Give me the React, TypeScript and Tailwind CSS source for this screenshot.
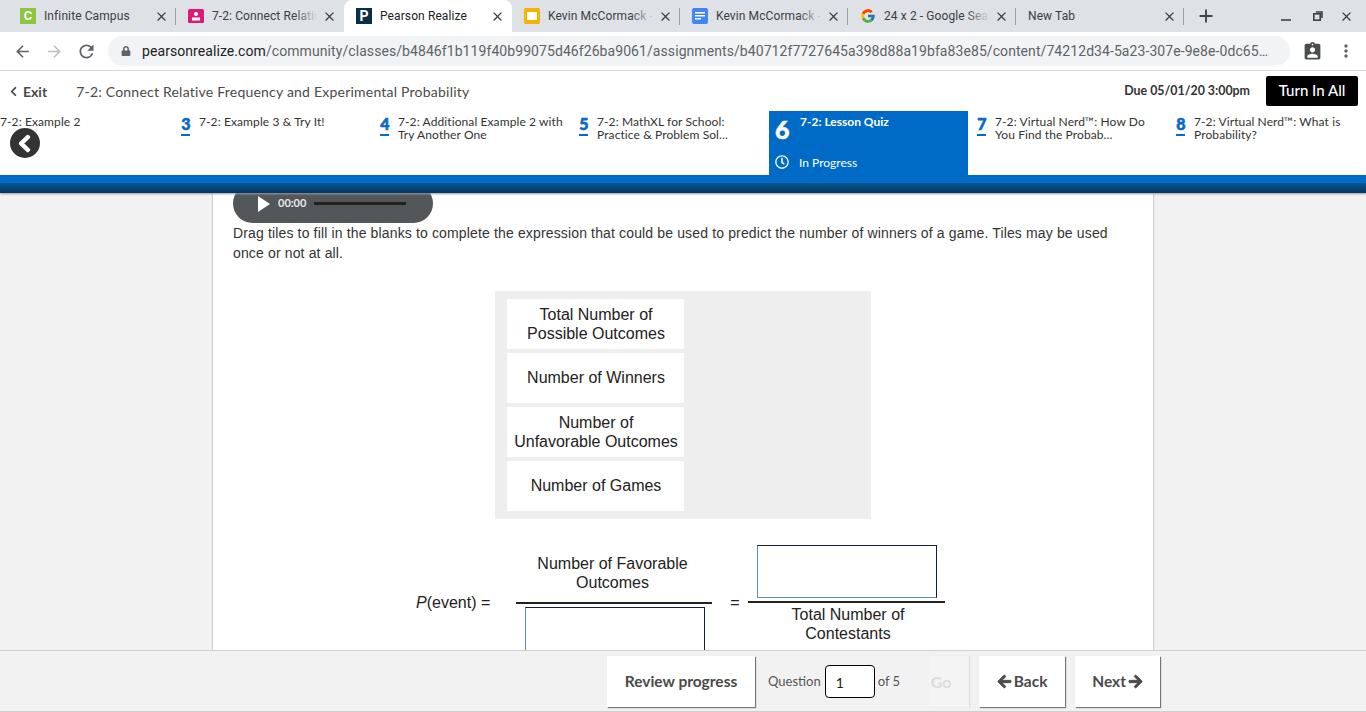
import React from 'react';
import { FaArrowLeft, FaArrowRight, FaChevronLeft, FaLock, FaRegClock } from 'react-icons/fa';
import { FcGoogle } from 'react-icons/fc';
import { MdAdd, MdArrowBack, MdArrowForward, MdAssignmentInd, MdClose, MdMoreVert, MdRefresh } from 'react-icons/md';

const Favicon = ({ kind }: { kind: string }) => {
  if (kind === 'campus')
    return <div className="w-4 h-4 bg-[#8cc63f] text-white text-[13px] font-bold leading-4 text-center">C</div>;
  if (kind === 'classroom')
    return (
      <svg width="16" height="16" viewBox="0 0 16 16">
        <rect y="1" width="16" height="14" rx="1.5" fill="#d81b7a" />
        <circle cx="8" cy="6" r="2" fill="#fff" />
        <rect x="4" y="9.5" width="8" height="3" fill="#fff" />
      </svg>
    );
  if (kind === 'pearson')
    return <div className="w-4 h-4 bg-[#0b2f47] text-white text-[14px] font-bold leading-4 text-center">P</div>;
  if (kind === 'slides')
    return (
      <svg width="16" height="16" viewBox="0 0 16 16">
        <rect width="16" height="16" rx="2" fill="#f4b400" />
        <rect x="3" y="4" width="10" height="8" fill="#fff" />
      </svg>
    );
  if (kind === 'docs')
    return (
      <svg width="16" height="16" viewBox="0 0 16 16">
        <rect width="16" height="16" rx="2" fill="#4285f4" />
        <rect x="3" y="4" width="10" height="1.5" fill="#fff" />
        <rect x="3" y="7" width="10" height="1.5" fill="#fff" />
        <rect x="3" y="10" width="6" height="1.5" fill="#fff" />
      </svg>
    );
  if (kind === 'google') return <FcGoogle size={16} />;
  return null;
};

const tabs = [
  { kind: 'campus', title: 'Infinite Campus', fade: false },
  { kind: 'classroom', title: '7-2: Connect Relative Frequency', fade: true },
  { kind: 'pearson', title: 'Pearson Realize', fade: false, active: true },
  { kind: 'slides', title: 'Kevin McCormack - Google Slides', fade: true },
  { kind: 'docs', title: 'Kevin McCormack - Google Docs', fade: true },
  { kind: 'google', title: '24 x 2 - Google Search', fade: true },
  { kind: '', title: 'New Tab', fade: false },
];

const navItems = [
  { n: '2', lines: ['7-2: Example 2'] },
  { n: '3', lines: ['7-2: Example 3 & Try It!'] },
  { n: '4', lines: ['7-2: Additional Example 2 with', 'Try Another One'] },
  { n: '5', lines: ['7-2: MathXL for School:', 'Practice & Problem Sol...'] },
  { n: '6', lines: ['7-2: Lesson Quiz'], active: true },
  { n: '7', lines: ['7-2: Virtual Nerd™: How Do', 'You Find the Probab...'] },
  { n: '8', lines: ['7-2: Virtual Nerd™: What is', 'Probability?'] },
];

const tiles = [
  ['Total Number of', 'Possible Outcomes'],
  ['Number of Winners'],
  ['Number of', 'Unfavorable Outcomes'],
  ['Number of Games'],
];

const DropBox = ({ className }: { className: string }) => (
  <div className={`w-[180px] border border-t-[#10202e] border-r-[#10202e] border-b-[#5f8fb0] border-l-[#5f8fb0] ${className}`} />
);

const footerButton =
  'bg-white h-[51px] flex items-center justify-center text-[15.5px] font-bold text-[#4a4a4a] shadow-[1px_1px_1px_#777]';

export default function App() {
  return (
    <div className="w-[1366px] h-[712px] overflow-hidden flex flex-col bg-white font-['Lato',sans-serif]">
      {/* Tab strip */}
      <div className="h-8 shrink-0 bg-[#dee1e6] flex pl-2 font-['Roboto',sans-serif] text-[12px] tracking-[0.1px] text-[#3c4043]">
        {tabs.map((tab, i) => (
          <div
            key={tab.title}
            className={`w-[168px] h-8 flex items-center pl-3 pr-[7px] relative ${tab.active ? 'bg-white rounded-t-lg text-[#202124]' : ''}`}
          >
            {tab.kind && (
              <div className="w-4 h-4 mr-2 shrink-0">
                <Favicon kind={tab.kind} />
              </div>
            )}
            <div className={`relative overflow-hidden whitespace-nowrap ${tab.fade ? 'w-[106px]' : 'w-[117px]'}`}>
              {tab.title}
              {tab.fade && <div className="absolute right-0 top-0 bottom-0 w-6 bg-gradient-to-r from-transparent to-[#dee1e6]" />}
            </div>
            <MdClose size={15} className="ml-auto shrink-0 text-[#3c4043]" />
            {(i === 0 || i >= 3) && <div className="absolute right-0 top-2 h-[17px] w-px bg-[#9aa0a6]" />}
          </div>
        ))}
        <div className="w-11 h-8 flex items-center justify-center text-[#3c4043]">
          <MdAdd size={22} />
        </div>
        <div className="ml-auto flex items-center text-[#3c4043]">
          <div className="w-9 flex justify-center mt-2">
            <div className="w-[10px] h-[2px] bg-[#5f6368]" />
          </div>
          <div className="w-7 flex justify-center">
            <svg width="10" height="10" viewBox="0 0 10 10" fill="none" stroke="#3c4043" strokeWidth="1.6">
              <rect x="0.8" y="2.8" width="6.4" height="6.4" />
              <path d="M3 1h6v6" />
            </svg>
          </div>
          <div className="w-7 flex justify-center mr-[6px]">
            <MdClose size={15} />
          </div>
        </div>
      </div>

      {/* Toolbar */}
      <div className="h-[39px] shrink-0 bg-white border-b border-[#d6d8da] flex items-center pl-2 font-['Roboto',sans-serif]">
        <div className="w-7 flex justify-center text-[#5f6368]"><MdArrowBack size={19} /></div>
        <div className="w-[36px] flex justify-center text-[#bcc0c4]"><MdArrowForward size={19} /></div>
        <div className="w-7 flex justify-center text-[#5f6368]"><MdRefresh size={21} /></div>
        <div className="ml-2 w-[1182px] h-[30px] rounded-full bg-[#f1f3f4] flex items-center pl-[13px] pr-[22px] text-[14px] tracking-[0.075px] text-[#5f6368]">
          <FaLock size={10} className="text-[#5f6368] mr-[11px] shrink-0" />
          <div className="overflow-hidden whitespace-nowrap">
            <span className="text-[#202124]">pearsonrealize.com</span>
            /community/classes/b4846f1b119f40b99075d46f26ba9061/assignments/b40712f7727645a398d88a19bfa83e85/content/74212d34-5a23-307e-9e8e-0dc65…
          </div>
        </div>
        <div className="ml-[12px] text-[#4a4d50]"><MdAssignmentInd size={21} /></div>
        <div className="ml-[13px] text-[#5f6368]"><MdMoreVert size={20} /></div>
      </div>

      {/* Assignment header */}
      <div className="h-10 shrink-0 flex items-center pl-[8px] pr-2 bg-white">
        <FaChevronLeft size={11} className="text-[#4a4a4a]" />
        <span className="ml-[4px] text-[14px] font-bold text-[#4a4a4a]">Exit</span>
        <span className="ml-[29px] text-[14px] tracking-[0.22px] text-[#4a4a4a]">7-2: Connect Relative Frequency and Experimental Probability</span>
        <span className="ml-auto text-[12.4px] font-bold text-[#333]">Due 05/01/20 3:00pm</span>
        <div className="ml-4 w-[92px] h-[30px] bg-black rounded-[2px] text-white text-[15px] font-medium flex items-center justify-center pb-[2px]">Turn In All</div>
      </div>

      {/* Lesson item strip */}
      <div className="relative h-16 shrink-0 bg-white overflow-hidden flex -ml-[27px] w-[1420px]">
        {navItems.map((item) => (
          <div
            key={item.n}
            className={`w-[199px] h-16 shrink-0 flex pt-[4px] text-[12px] leading-[13px] ${item.active ? 'bg-[#006bc6] text-white font-bold pl-[6px]' : 'text-[#333] tracking-[0.1px] pl-[9px]'}`}
          >
            <div className={`shrink-0 text-center font-black ${item.active ? 'w-[25px] text-[25px] leading-[28px] text-left [-webkit-text-stroke:0.5px_#fff]' : 'w-[10px] text-[16px] leading-[15px] text-[#0a6ac4] mt-[1px] [-webkit-text-stroke:0.6px_#0a6ac4]'}`}>
              {item.n}
              {!item.active && <div className="w-[9px] h-[2px] bg-[#0a6ac4] mt-[3px]" />}
            </div>
            <div className={item.active ? '' : 'ml-[8px]'}>
              {item.lines.map((line) => (
                <div key={line} className="whitespace-nowrap">{line}</div>
              ))}
              {item.active && (
                <div className="font-normal mt-[27px] -ml-[25px] flex items-center">
                  <FaRegClock size={14} className="mr-[10px]" />
                  In Progress
                </div>
              )}
            </div>
          </div>
        ))}
        <div className="absolute left-[37px] top-[17px] w-[30px] h-[30px] rounded-full bg-[#333] flex items-center justify-center text-white">
          <FaChevronLeft size={19} stroke="currentColor" strokeWidth={40} className="-ml-[2px]" />
        </div>
      </div>

      {/* Blue band */}
      <div className="h-[18px] shrink-0 z-10 flex flex-col">
        <div className="h-2 bg-[#006bc6]" />
        <div className="h-[10px] bg-gradient-to-b from-[#0a5597] to-[#03385f] shadow-[0_1px_2px_#9a9a9a]" />
      </div>

      {/* Question scroll area */}
      <div className="flex-1 min-h-0 overflow-hidden bg-[#f2f2f2] flex justify-center">
        <div className="w-[940px] h-[600px] shrink-0 bg-white pl-5 pr-5 font-['Liberation_Sans',sans-serif] shadow-[0_0_2px_#888]">
          <div className="-mt-[9px] w-[200px] h-[39px] rounded-[20px] bg-[#54575a] flex items-center pl-[25px] text-white text-[11px] font-bold">
            <svg width="12" height="16" viewBox="0 0 12 16" fill="#fff">
              <path d="M0 0l12 8-12 8z" />
            </svg>
            <span className="ml-[8px] font-['Lato',sans-serif] text-[#e8e8e8]">00:00</span>
            <div className="ml-[8px] w-[92px] h-[3px] bg-[#26211f]" />
          </div>
          <p className="text-[14px] leading-5 tracking-[0.145px] text-[#333]">
            Drag tiles to fill in the blanks to complete the expression that could be used to predict the number of winners of a game. Tiles may be used once or not at all.
          </p>

          <div className="mt-[28px] ml-[262px] w-[376px] h-[228px] bg-[#eeeeee] pt-2 pl-3 flex flex-col gap-1">
            {tiles.map((lines) => (
              <div key={lines[0]} className={`w-[177px] h-[50px] bg-white flex flex-col items-center justify-center pl-px text-[16px] leading-[19px] text-[#222] ${lines.length === 1 ? 'pb-[2px]' : ''}`}>
                {lines.map((line) => (
                  <div key={line} className="whitespace-nowrap">{line}</div>
                ))}
              </div>
            ))}
          </div>

          {/* Equation */}
          <div className="mt-[26px] ml-[183px] flex items-start text-[16px] leading-[19px] text-[#222]">
            <div className="w-[100px] mt-[48px] whitespace-nowrap"><i>P</i>(event) =</div>
            <div className="w-[196px] flex flex-col items-center mt-[9px]">
              <div className="h-[48px] text-center pr-[3px]">Number of Favorable<br />Outcomes</div>
              <div className="w-full h-[2px] bg-[#222]" />
              <DropBox className="h-[52px] mt-[3px] ml-[1px]" />
            </div>
            <div className="w-9 mt-[48px] pl-[10px] text-center">=</div>
            <div className="w-[197px] flex flex-col items-center">
              <DropBox className="h-[53px]" />
              <div className="w-full h-[2px] bg-[#222] mt-[3px]" />
              <div className="text-center mt-[2px] pl-[3px]">Total Number of<br />Contestants</div>
            </div>
          </div>
        </div>
      </div>

      {/* Footer */}
      <div className="h-[62px] shrink-0 z-10 bg-[#f2f2f2] border-t border-b border-[#cfcfcf] flex pl-[607px] pt-[5px] text-[#4a4a4a]">
        <div className={`${footerButton} w-[148px]`}>Review progress</div>
        <div className="ml-[13px] h-[51px] flex items-center text-[13px] text-[#555]">
          Question
          <div className="ml-[4px] w-[50px] h-[33px] rounded-[4px] border border-black bg-white flex items-center pl-[10px] pt-[2px] text-[14px] text-[#222]">1</div>
          <span className="ml-[3px]">of 5</span>
        </div>
        <div className="ml-[29px] w-10 h-[51px] bg-[#f4f4f4] shadow-[1px_0_1px_#ddd] flex items-center justify-center pr-4 text-[16px] font-bold text-[#dcdcdc]">Go</div>
        <div className={`${footerButton} ml-[10px] w-[86px] gap-[2px]`}>
          <FaArrowLeft size={15} stroke="currentColor" strokeWidth={30} />
          Back
        </div>
        <div className={`${footerButton} ml-[10px] w-[85px] gap-[2px]`}>
          Next
          <FaArrowRight size={15} stroke="currentColor" strokeWidth={30} />
        </div>
      </div>
    </div>
  );
}
